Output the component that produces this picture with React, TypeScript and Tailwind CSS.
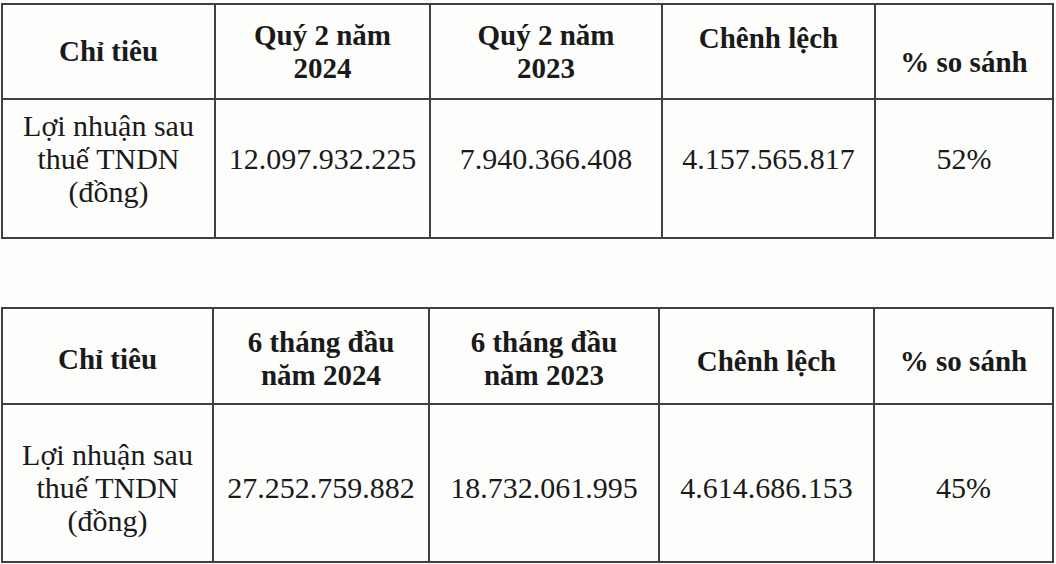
type Cell = { text: string[]; shift?: string };

interface ProfitTableProps {
  cols: string;
  header: Cell[];
  body: Cell[];
  headerHeight: string;
  bodyHeight: string;
  bodyShift: string;
}

function ProfitTable({ cols, header, body, headerHeight, bodyHeight, bodyShift }: ProfitTableProps) {
  return (
    <div className={`grid ${cols} w-[1053px] border-l-2 border-t-2 border-[#404040]`}>
      {header.map((cell, i) => (
        <div
          key={`h${i}`}
          className={`${headerHeight} flex flex-col items-center justify-center border-r-2 border-b-2 border-[#404040] text-center text-[29px] font-bold leading-[33px] ${cell.shift ?? ''}`}
        >
          {cell.text.map((line) => (
            <span key={line}>{line}</span>
          ))}
        </div>
      ))}
      {body.map((cell, i) => (
        <div
          key={`b${i}`}
          className={`${bodyHeight} flex flex-col items-center justify-center border-r-2 border-b-2 border-[#404040] text-center text-[30px] leading-[33px] ${bodyShift}`}
        >
          {cell.text.map((line) => (
            <span key={line}>{line}</span>
          ))}
        </div>
      ))}
    </div>
  );
}

const rowLabel: Cell = { text: ['Lợi nhuận sau', 'thuế TNDN', '(đồng)'] };

export default function App() {
  return (
    <div className="h-[564px] w-full overflow-hidden bg-[#fdfdfc] font-['Liberation_Serif','DejaVu_Serif',serif] text-[#1a1a1a]">
      <div className="pl-[1px] pt-[3px]">
        <ProfitTable
          cols="grid-cols-[213px_215px_232px_213px_178px]"
          headerHeight="h-[95px]"
          bodyHeight="h-[139px]"
          bodyShift="pb-[20px]"
          header={[
            { text: ['Chỉ tiêu'] },
            { text: ['Quý 2 năm', '2024'] },
            { text: ['Quý 2 năm', '2023'] },
            { text: ['Chênh lệch'], shift: 'pb-[26px]' },
            { text: ['% so sánh'], shift: 'pt-[22px]' },
          ]}
          body={[
            rowLabel,
            { text: ['12.097.932.225'] },
            { text: ['7.940.366.408'] },
            { text: ['4.157.565.817'] },
            { text: ['52%'] },
          ]}
        />

        <div className="mt-[68px]">
          <ProfitTable
            cols="grid-cols-[211px_216px_230px_215px_179px]"
            headerHeight="h-[96px]"
            bodyHeight="h-[158px]"
            bodyShift="pt-[8px]"
            header={[
              { text: ['Chỉ tiêu'], shift: 'pt-[6px]' },
              { text: ['6 tháng đầu', 'năm 2024'], shift: 'pt-[6px]' },
              { text: ['6 tháng đầu', 'năm 2023'], shift: 'pt-[6px]' },
              { text: ['Chênh lệch'], shift: 'pt-[10px]' },
              { text: ['% so sánh'], shift: 'pt-[10px]' },
            ]}
            body={[
              rowLabel,
              { text: ['27.252.759.882'] },
              { text: ['18.732.061.995'] },
              { text: ['4.614.686.153'] },
              { text: ['45%'] },
            ]}
          />
        </div>
      </div>
    </div>
  );
}
